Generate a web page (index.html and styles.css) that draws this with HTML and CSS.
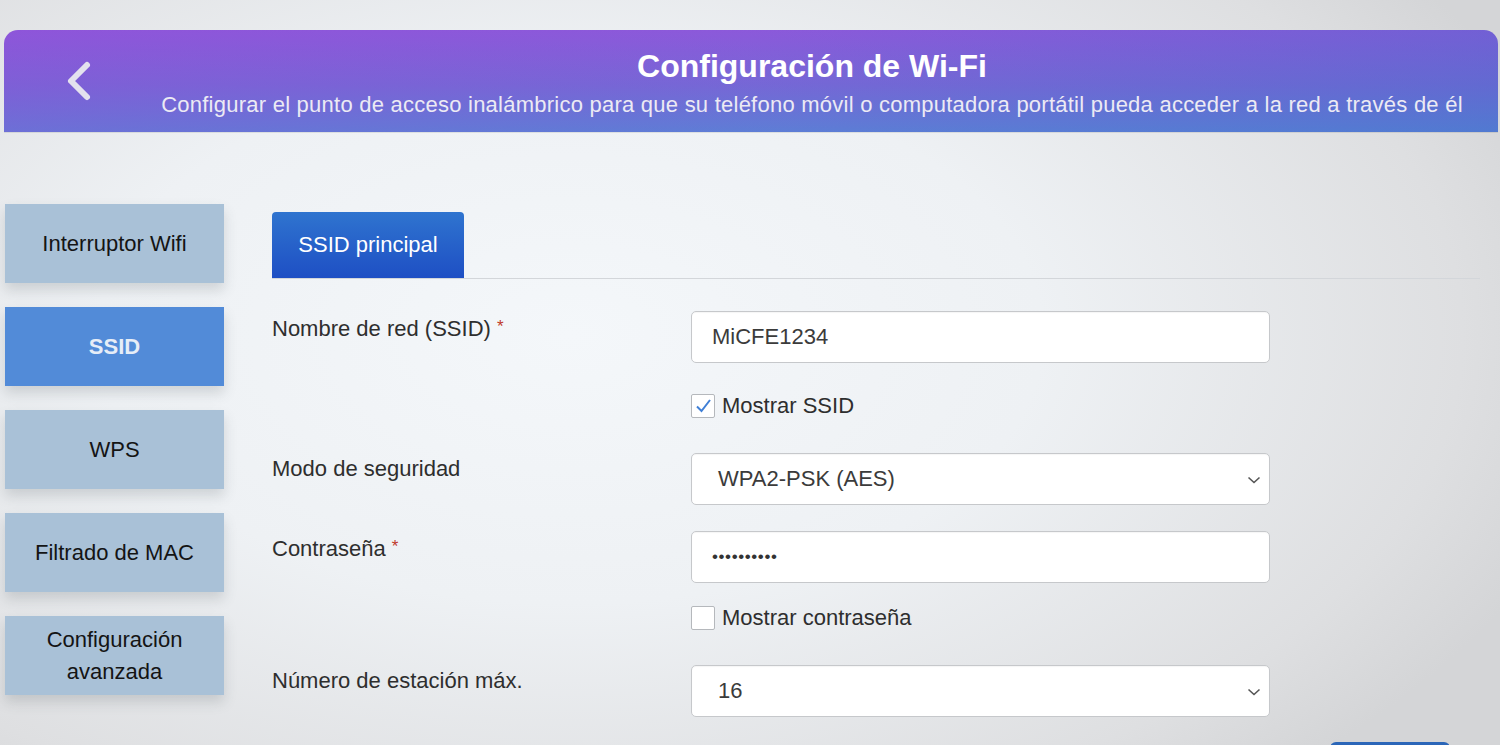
FILE: index.html
```html
<!DOCTYPE html>
<html lang="es">
<head>
<meta charset="utf-8">
<title>Configuración de Wi-Fi</title>
<link rel="stylesheet" href="styles.css">
</head>
<body>
<div class="page">
  <header class="header">
    <div class="back">
      <svg width="30" height="42" viewBox="0 0 30 42"><path d="M24 5 L8 21 L24 37" fill="none" stroke="#e4e2ee" stroke-width="6" stroke-linecap="round" stroke-linejoin="round"/></svg>
    </div>
    <div class="titles">
      <h1 class="title">Configuración de Wi-Fi</h1>
      <p class="subtitle">Configurar el punto de acceso inalámbrico para que su teléfono móvil o computadora portátil pueda acceder a la red a través de él</p>
    </div>
  </header>

  <div class="content">
    <nav class="sidebar">
      <div class="nav-item">Interruptor Wifi</div>
      <div class="nav-item active">SSID</div>
      <div class="nav-item">WPS</div>
      <div class="nav-item">Filtrado de MAC</div>
      <div class="nav-item">Configuración<br>avanzada</div>
    </nav>

    <main class="main">
      <div class="tabs">
        <div class="tab">SSID principal</div>
      </div>

      <div class="form">
        <div class="row row-ssid">
          <label class="label">Nombre de red (SSID) <span class="req">*</span></label>
          <div class="control">
            <div class="field">MiCFE1234</div>
            <div class="check check-ssid">
              <span class="box checked"><svg width="20" height="20" viewBox="0 0 20 20"><path d="M4 10.5 L8.5 15 L17 4" fill="none" stroke="#3f7fd6" stroke-width="2"/></svg></span>
              <span>Mostrar SSID</span>
            </div>
          </div>
        </div>

        <div class="row row-sec">
          <label class="label">Modo de seguridad</label>
          <div class="control">
            <div class="field select">WPA2-PSK (AES)
              <svg class="chev" width="14" height="10" viewBox="0 0 14 10"><path d="M1.5 2.5 L7 7.5 L12.5 2.5" fill="none" stroke="#555" stroke-width="1.6"/></svg>
            </div>
          </div>
        </div>

        <div class="row row-pass">
          <label class="label">Contraseña <span class="req">*</span></label>
          <div class="control">
            <div class="field dots">••••••••••</div>
            <div class="check check-pass">
              <span class="box"></span>
              <span>Mostrar contraseña</span>
            </div>
          </div>
        </div>

        <div class="row row-max">
          <label class="label">Número de estación máx.</label>
          <div class="control">
            <div class="field select">16
              <svg class="chev" width="14" height="10" viewBox="0 0 14 10"><path d="M1.5 2.5 L7 7.5 L12.5 2.5" fill="none" stroke="#555" stroke-width="1.6"/></svg>
            </div>
          </div>
        </div>

        <div class="actions">
          <div class="btn"></div>
        </div>
      </div>
    </main>
  </div>
</div>
</body>
</html>
```

FILE: styles.css
```css
* { box-sizing: border-box; }
html, body {
  margin: 0;
  padding: 0;
  width: 1500px;
  height: 745px;
  overflow: hidden;
}
body {
  font-family: "Liberation Sans", Arial, sans-serif;
  color: #2b2b2b;
  background:
    radial-gradient(ellipse 70% 80% at 38% 45%, #f4f7fa 0%, #eef1f4 45%, #dedfe1 85%, #d4d5d7 100%);
}
.page {
  display: flex;
  flex-direction: column;
  height: 745px;
  overflow: hidden;
}
.header {
  flex-shrink: 0;
  margin: 30px 2px 0 4px;
  height: 102px;
  border-radius: 14px 14px 0 0;
  background:
    linear-gradient(to right, rgba(140, 80, 215, 0.35), rgba(110, 100, 210, 0.1) 50%, rgba(60, 110, 200, 0.35)),
    linear-gradient(to bottom, #8f58db 0%, #7668d6 55%, #5c80d6 100%);
  display: flex;
  box-shadow: 0 1px 0 rgba(0,0,0,0.08);
}
.back {
  width: 122px;
  padding: 30px 0 0 59px;
}
.back svg { display: block; }
.titles {
  flex: 1;
  text-align: center;
  color: #fff;
}
.title {
  margin: 17px 0 0;
  font-size: 32px;
  line-height: 38px;
  font-weight: bold;
}
.subtitle {
  margin: 7px 0 0;
  font-size: 22px;
  line-height: 26px;
  color: #eceaf4;
  letter-spacing: 0.24px;
}
.content {
  flex-shrink: 0;
  display: flex;
  padding: 72px 0 0 5px;
}
.sidebar {
  width: 219px;
  display: flex;
  flex-direction: column;
  gap: 24px;
}
.nav-item {
  height: 79px;
  background: #a9c1d7;
  display: flex;
  align-items: center;
  justify-content: center;
  text-align: center;
  font-size: 22px;
  line-height: 32px;
  color: #141414;
  box-shadow: 0 7px 12px rgba(60, 70, 80, 0.18);
}
.nav-item.active {
  background: #528bd8;
  color: #e6edf7;
  font-weight: bold;
}
.main {
  flex: 1;
  margin: 8px 20px 0 48px;
}
.tabs {
  border-bottom: 1px solid #d3d6da;
  display: flex;
}
.tab {
  width: 192px;
  height: 66px;
  border-radius: 4px 4px 0 0;
  background: linear-gradient(to bottom, #2f74cf 0%, #1e4fc4 100%);
  color: #fff;
  font-size: 22px;
  display: flex;
  align-items: center;
  justify-content: center;
}
.form {
  padding-top: 32px;
}
.row {
  display: grid;
  grid-template-columns: 419px 579px;
}
.label {
  font-size: 22px;
  line-height: 24px;
  padding-top: 4px;
  color: #2e2e2e;
}
.req {
  color: #c0392b;
  font-size: 17px;
  vertical-align: 4px;
}
.field {
  position: relative;
  height: 52px;
  background: #fff;
  border: 1px solid #c6c8cb;
  border-radius: 5px;
  padding: 0 20px;
  display: flex;
  align-items: center;
  font-size: 22px;
  color: #3b3b3b;
  box-shadow: inset 0 1px 1px rgba(0,0,0,0.04);
}
.select { padding-left: 26px; }
.dots {
  font-size: 17px;
  letter-spacing: 0.6px;
  color: #333;
}
.chev {
  position: absolute;
  right: 8px;
  top: 21px;
}
.check {
  display: flex;
  align-items: center;
  gap: 7px;
  font-size: 22px;
  color: #2e2e2e;
  height: 24px;
}
.box {
  width: 24px;
  height: 24px;
  border: 1.5px solid #b5b8bc;
  border-radius: 2px;
  background: #fff;
  display: flex;
  align-items: center;
  justify-content: center;
}
.check-ssid { margin-top: 31px; }
.check-pass { margin-top: 23px; }
.row-sec { margin-top: 35px; }
.row-pass { margin-top: 26px; }
.row-max { margin-top: 35px; }
.actions {
  display: flex;
  justify-content: flex-end;
  padding-right: 30px;
  margin-top: 25px;
}
.btn {
  width: 120px;
  height: 44px;
  border-radius: 6px;
  background: #2b66b8;
}
```
